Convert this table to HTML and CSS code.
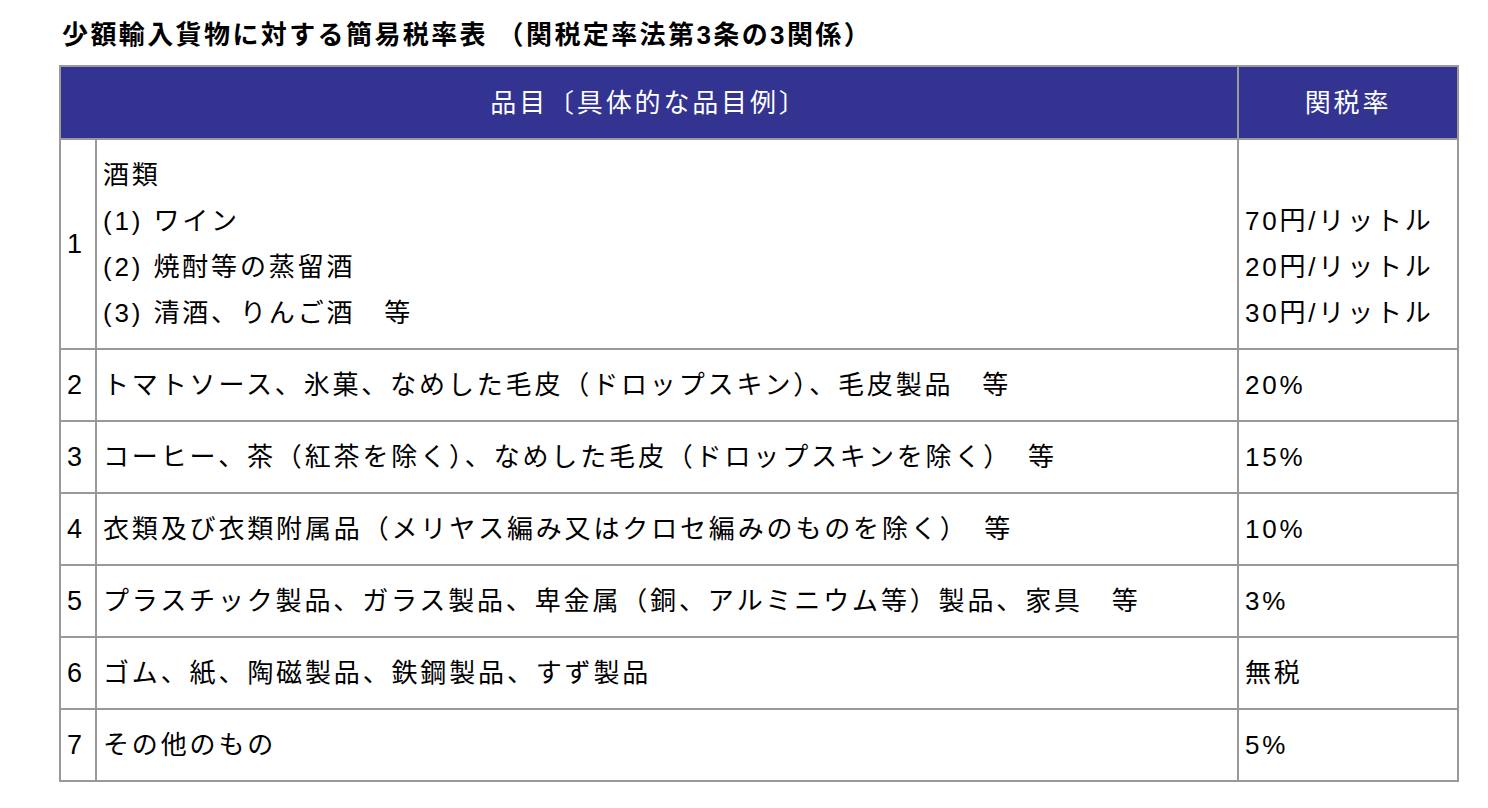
FILE: index.html
```html
<!DOCTYPE html>
<html lang="ja">
<head>
<meta charset="utf-8">
<link rel="stylesheet" href="styles.css">
</head>
<body>
<div class="page">
  <h1 class="title">少額輸入貨物に対する簡易税率表 （関税定率法第3条の3関係）</h1>
  <table class="rates">
    <thead>
      <tr>
        <th class="head-item" colspan="2">品目〔具体的な品目例〕</th>
        <th class="head-rate">関税率</th>
      </tr>
    </thead>
    <tbody>
      <tr>
        <td class="num">1</td>
        <td class="item">酒類<br>(1) ワイン<br>(2) 焼酎等の蒸留酒<br>(3) 清酒、りんご酒　等</td>
        <td class="rate"><br>70円/リットル<br>20円/リットル<br>30円/リットル</td>
      </tr>
      <tr>
        <td class="num">2</td>
        <td class="item">トマトソース、氷菓、なめした毛皮（ドロップスキン）、毛皮製品　等</td>
        <td class="rate">20%</td>
      </tr>
      <tr>
        <td class="num">3</td>
        <td class="item">コーヒー、茶（紅茶を除く）、なめした毛皮（ドロップスキンを除く）　等</td>
        <td class="rate">15%</td>
      </tr>
      <tr>
        <td class="num">4</td>
        <td class="item">衣類及び衣類附属品（メリヤス編み又はクロセ編みのものを除く）　等</td>
        <td class="rate">10%</td>
      </tr>
      <tr>
        <td class="num">5</td>
        <td class="item">プラスチック製品、ガラス製品、卑金属（銅、アルミニウム等）製品、家具　等</td>
        <td class="rate">3%</td>
      </tr>
      <tr>
        <td class="num">6</td>
        <td class="item">ゴム、紙、陶磁製品、鉄鋼製品、すず製品</td>
        <td class="rate">無税</td>
      </tr>
      <tr>
        <td class="num">7</td>
        <td class="item">その他のもの</td>
        <td class="rate">5%</td>
      </tr>
    </tbody>
  </table>
</div>
</body>
</html>
```
FILE: styles.css
```css
html, body {
  margin: 0;
  padding: 0;
  background: #ffffff;
}
body {
  font-family: "Liberation Sans", "Noto Sans CJK JP", sans-serif;
  color: #000;
}
.page {
  padding: 18px 0 0 59px;
}
.title {
  margin: 0 0 13px 3px;
  font-size: 26px;
  line-height: 34px;
  font-weight: bold;
  letter-spacing: 2.4px;
}
.rates {
  border-collapse: collapse;
  width: 1400px;
  font-size: 26px;
  letter-spacing: 2.85px;
}
.rates th,
.rates td {
  border: 2px solid #999999;
  line-height: 46px;
}
.rates th {
  background: #333391;
  color: #ffffff;
  font-weight: normal;
  height: 71px;
  padding: 0;
  text-align: center;
}
.rates td {
  padding: 12px 6px;
  vertical-align: middle;
  text-align: left;
}
.rates .num {
  width: 24px;
  padding: 0 4px 0 6px;
  font-size: 27px;
  letter-spacing: 0;
}
.rates .rate {
  width: 206px;
  letter-spacing: 2.8px;
}
```
